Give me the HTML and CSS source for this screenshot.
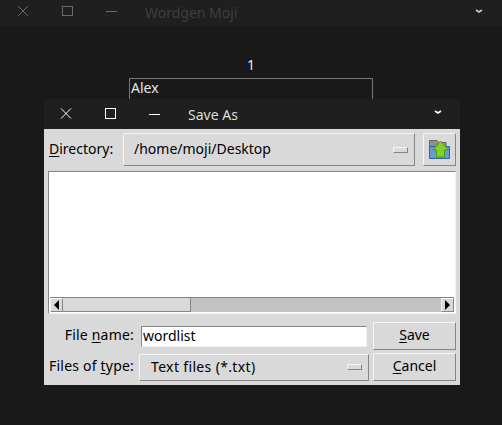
FILE: index.html
```html
<!DOCTYPE html>
<html lang="en">
<head>
    <meta charset="UTF-8">
    <meta name="viewport" content="width=device-width, initial-scale=1.0">
    <title>Wordgen Moji</title>
    <link rel="stylesheet" href="styles.css">
</head>
<body>
    <div class="main-window">
        <div class="titlebar titlebar-dim">
            <svg class="win-btn" viewBox="0 0 44 26"><path d="M18 6 L28 16 M28 6 L18 16"/></svg>
            <svg class="win-btn" viewBox="0 0 44 26"><rect x="18.5" y="6.5" width="10" height="9"/></svg>
            <svg class="win-btn" viewBox="0 0 44 26"><path d="M18 11.5 H29"/></svg>
            <span class="title">Wordgen Moji</span>
            <svg class="chevron" viewBox="0 0 10 6"><path d="M2 2 L5 4 L8 2"/></svg>
        </div>
        <div class="main-body">
            <div class="counter">1</div>
            <div class="name-field">Alex</div>
        </div>
    </div>

    <div class="dialog">
        <div class="titlebar">
            <svg class="win-btn" viewBox="0 0 44 30"><path d="M17 9.5 L27 19.5 M27 9.5 L17 19.5"/></svg>
            <svg class="win-btn" viewBox="0 0 44 30"><rect x="17.5" y="9.5" width="10" height="10"/></svg>
            <svg class="win-btn" viewBox="0 0 44 30"><path d="M17 15.5 H28"/></svg>
            <span class="title">Save As</span>
            <svg class="chevron" viewBox="0 0 10 6"><path d="M2 2 L5 4 L8 2"/></svg>
        </div>
        <div class="dialog-body">
            <div class="dir-row">
                <span class="label"><u>D</u>irectory:</span>
                <div class="raised menu dir-menu">
                    <span class="menu-text">/home/moji/Desktop</span>
                    <i class="menu-mark"></i>
                </div>
                <div class="raised up-btn">
                    <svg width="23" height="21" viewBox="0 0 23 21">
                        <path d="M1.5 1.5 H9 L10.5 3.5 H18 V12 H1.5 Z" fill="#8f8f8f" stroke="#666"/>
                        <path d="M1.5 7.5 H21.5 V19.5 H1.5 Z" fill="#6a9ad6" stroke="#34649f"/>
                        <path d="M12.5 2 L20.5 11 H16.5 V18 H8.5 V11 H5 Z" fill="#82d02a" stroke="#4a9a12"/>
                    </svg>
                </div>
            </div>
            <div class="file-list">
                <div class="list-area"></div>
                <div class="scrollbar">
                    <div class="arrow-btn"><i class="arrow-left"></i></div>
                    <div class="thumb"></div>
                    <div class="trough"></div>
                    <div class="arrow-btn"><i class="arrow-right"></i></div>
                </div>
            </div>
            <div class="form-grid">
                <span class="label label-right">File <u>n</u>ame:</span>
                <div class="text-input">wordlist</div>
                <div class="raised push-btn"><u>S</u>ave</div>
                <span class="label label-right">Files of <u>t</u>ype:</span>
                <div class="raised menu type-menu">
                    <span class="menu-text">Text files (*.txt)</span>
                    <i class="menu-mark"></i>
                </div>
                <div class="raised push-btn"><u>C</u>ancel</div>
            </div>
        </div>
    </div>
</body>
</html>
```

FILE: styles.css
```css
html, body {
    margin: 0;
    height: 100%;
}

body {
    font-family: "Noto Sans", sans-serif;
    font-size: 14px;
    background-color: #191919;
    color: #000;
    overflow: hidden;
    position: relative;
}

u {
    text-underline-offset: 2px;
}

.titlebar {
    display: flex;
    align-items: center;
    background-color: #1f1f1f;
    color: #dcdcdc;
}

.titlebar svg {
    fill: none;
    stroke: #fff;
    stroke-width: 1;
}

.win-btn {
    width: 44px;
    flex: none;
}

.title {
    flex: 1;
}

.chevron {
    width: 10px;
    height: 6px;
    stroke-width: 1.6 !important;
}

/* main window, greyed out behind the dialog */
.main-window {
    height: 100%;
}

.titlebar-dim {
    height: 26px;
    color: #3e3e3e;
}

.titlebar-dim svg {
    stroke: #6a6a6a;
    height: 26px;
}

.titlebar-dim .title {
    margin-left: 13px;
    padding-bottom: 2px;
}

.titlebar-dim .chevron {
    height: 6px;
    margin-right: 18px;
    margin-bottom: 4px;
    stroke: #c8c8c8;
}

.main-body {
    display: flex;
    flex-direction: column;
    align-items: center;
    padding-top: 29px;
    color: #e6e6e6;
}

.counter {
    line-height: 20px;
    margin-bottom: 3px;
}

.name-field {
    width: 241px;
    height: 30px;
    border: 1px solid #777;
    padding-left: 1px;
    line-height: 18px;
}

/* save dialog */
.dialog {
    position: absolute;
    left: 44px;
    top: 99px;
    width: 416px;
    height: 286px;
    background-color: #d9d9d9;
}

.dialog .titlebar {
    height: 30px;
}

.dialog .win-btn {
    height: 30px;
}

.dialog .title {
    margin-left: 12px;
}

.dialog .chevron {
    margin-right: 17px;
    margin-bottom: 4px;
}

.dialog-body {
    padding: 4px 4px 0;
}

.raised {
    box-sizing: border-box;
    background-color: #d9d9d9;
    border: 1px solid;
    border-color: #f4f4f4 #858585 #858585 #f4f4f4;
}

.label {
    white-space: nowrap;
    padding: 0 1px 3px 0;
    letter-spacing: 0.2px;
}

.label-right {
    text-align: right;
}

.dir-row {
    display: flex;
    align-items: center;
    height: 33px;
}

.dir-row .label {
    width: 74px;
    flex: none;
    margin-left: 1px;
    padding-right: 0;
    letter-spacing: 0;
}

.menu {
    display: flex;
    align-items: center;
    justify-content: space-between;
}

.menu-text {
    padding-bottom: 2px;
}

.menu-mark {
    width: 13px;
    height: 4px;
    border: 1px solid;
    border-color: #f4f4f4 #858585 #858585 #f4f4f4;
}

.dir-menu {
    width: 292px;
    height: 33px;
    padding: 0 6px 0 10px;
}

.up-btn {
    width: 33px;
    height: 33px;
    margin-left: 8px;
    display: flex;
    align-items: center;
    justify-content: center;
}

.file-list {
    box-sizing: border-box;
    height: 143px;
    margin-top: 5px;
    display: flex;
    flex-direction: column;
    background-color: #fff;
    border-top: 1px solid #858585;
    border-left: 1px solid #858585;
    border-right: 1px solid #f4f4f4;
    border-bottom: 1px solid #f4f4f4;
}

.list-area {
    flex: 1;
}

.scrollbar {
    height: 15px;
    display: flex;
    margin: 0 1px 1px 1px;
    box-sizing: border-box;
    background-color: #c3c3c3;
    border-top: 1px solid #858585;
}

.arrow-btn {
    width: 11px;
    flex: none;
    background-color: #d9d9d9;
    border: 1px solid;
    border-color: #f4f4f4 #858585 #858585 #f4f4f4;
    display: flex;
    align-items: center;
    justify-content: center;
}

.arrow-left {
    border-right: 5px solid #000;
    border-top: 5px solid transparent;
    border-bottom: 5px solid transparent;
}

.arrow-right {
    border-left: 5px solid #000;
    border-top: 5px solid transparent;
    border-bottom: 5px solid transparent;
}

.thumb {
    width: 127px;
    background-color: #d9d9d9;
    border-right: 1px solid #858585;
    border-bottom: 1px solid #858585;
}

.trough {
    flex: 1;
}

.form-grid {
    display: grid;
    grid-template-columns: 86px 230px 83px;
    grid-template-rows: 28px 28px;
    column-gap: 4px;
    row-gap: 3px;
    align-items: center;
    margin-top: 8px;
    margin-left: 1px;
}

.text-input {
    box-sizing: border-box;
    height: 21px;
    margin: 0 2px;
    padding-left: 1px;
    line-height: 17px;
    background-color: #fff;
    border: 1px solid;
    border-color: #858585 #f4f4f4 #f4f4f4 #858585;
}

.type-menu {
    height: 27px;
    padding: 0 6px 0 11px;
}

.type-menu .menu-text {
    letter-spacing: 0.35px;
}

.push-btn {
    height: 28px;
    padding-bottom: 3px;
    display: flex;
    align-items: center;
    justify-content: center;
}
```
